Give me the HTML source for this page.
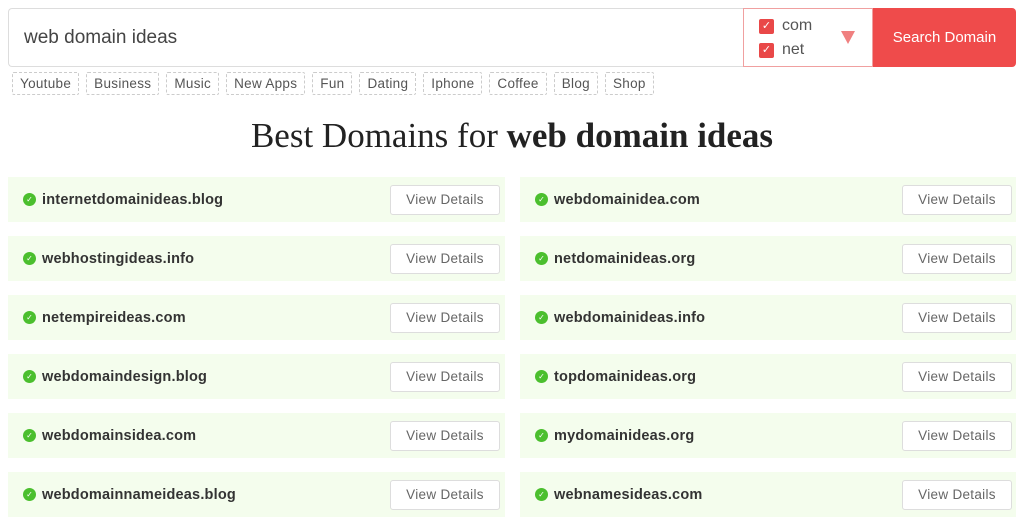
<!DOCTYPE html><html><head><style>
body{margin:0;background:#fff;font-family:"Liberation Sans",sans-serif;width:1024px;height:524px;overflow:hidden;position:relative}
.search{position:absolute;left:8px;top:8px;width:735px;height:59px;border:1px solid #ddd;border-right:none;border-radius:4px 0 0 4px;box-sizing:border-box;font-size:19px;color:#444;line-height:58px;padding-left:15px}
.dd{position:absolute;left:743px;top:8px;width:130px;height:59px;border:1px solid #f0a0a0;box-sizing:border-box}
.cb{position:absolute;left:15px;width:15px;height:15px;background:#e94848;border-radius:2px;color:#fff;font-size:11px;text-align:center;line-height:15px}
.cl{position:absolute;left:38px;font-size:16px;color:#555}
.btn{position:absolute;left:873px;top:8px;width:143px;height:59px;background:#ef4b4b;color:#fff;font-size:15px;text-align:center;line-height:59px;border-radius:0 4px 4px 0}
.tags{position:absolute;left:12px;top:72px;display:flex;gap:7px}
.tags span{border:1px dashed #ccc;font-size:13.5px;color:#555;padding:0 7px;height:21px;line-height:21px;border-radius:2px;letter-spacing:0.3px}
h1{position:absolute;top:116px;left:0;width:1024px;text-align:center;margin:0;font-family:"Liberation Serif",serif;font-weight:normal;font-size:35px;color:#222}
.card{position:absolute;width:497px;height:45px;background:#f4fded}
.card .d{position:absolute;left:34px;top:1px;line-height:45px;font-weight:bold;font-size:14.5px;color:#333;letter-spacing:0.2px}
.card .ic{position:absolute;left:15px;top:16px;width:13px;height:13px;border-radius:50%;background:#4bbf2e;color:#fff;font-size:8px;text-align:center;line-height:13px}
.card .v{position:absolute;left:382px;top:8px;width:108px;height:28px;border:1px solid #ddd;border-radius:3px;background:#fff;font-size:13.5px;color:#666;text-align:center;line-height:28px;letter-spacing:0.3px}
.r{width:496px}
</style></head><body>
<div class="search">web domain ideas</div>
<div class="dd"><div class="cb" style="top:10px">✓</div><div class="cl" style="top:8px">com</div><div class="cb" style="top:34px">✓</div><div class="cl" style="top:32px">net</div><div style="position:absolute;left:97px;top:22px;width:0;height:0;border-left:7px solid transparent;border-right:7px solid transparent;border-top:13px solid #f08080"></div></div>
<div class="btn">Search Domain</div>
<div class="tags"><span>Youtube</span><span>Business</span><span>Music</span><span>New Apps</span><span>Fun</span><span>Dating</span><span>Iphone</span><span>Coffee</span><span>Blog</span><span>Shop</span></div>
<h1>Best Domains for <b>web domain ideas</b></h1>
<div class="card" style="left:8px;top:177px"><div class="ic">✓</div><div class="d">internetdomainideas.blog</div><div class="v">View Details</div></div>
<div class="card r" style="left:520px;top:177px"><div class="ic">✓</div><div class="d">webdomainidea.com</div><div class="v">View Details</div></div>
<div class="card" style="left:8px;top:236px"><div class="ic">✓</div><div class="d">webhostingideas.info</div><div class="v">View Details</div></div>
<div class="card r" style="left:520px;top:236px"><div class="ic">✓</div><div class="d">netdomainideas.org</div><div class="v">View Details</div></div>
<div class="card" style="left:8px;top:295px"><div class="ic">✓</div><div class="d">netempireideas.com</div><div class="v">View Details</div></div>
<div class="card r" style="left:520px;top:295px"><div class="ic">✓</div><div class="d">webdomainideas.info</div><div class="v">View Details</div></div>
<div class="card" style="left:8px;top:354px"><div class="ic">✓</div><div class="d">webdomaindesign.blog</div><div class="v">View Details</div></div>
<div class="card r" style="left:520px;top:354px"><div class="ic">✓</div><div class="d">topdomainideas.org</div><div class="v">View Details</div></div>
<div class="card" style="left:8px;top:413px"><div class="ic">✓</div><div class="d">webdomainsidea.com</div><div class="v">View Details</div></div>
<div class="card r" style="left:520px;top:413px"><div class="ic">✓</div><div class="d">mydomainideas.org</div><div class="v">View Details</div></div>
<div class="card" style="left:8px;top:472px"><div class="ic">✓</div><div class="d">webdomainnameideas.blog</div><div class="v">View Details</div></div>
<div class="card r" style="left:520px;top:472px"><div class="ic">✓</div><div class="d">webnamesideas.com</div><div class="v">View Details</div></div>
</body></html>
